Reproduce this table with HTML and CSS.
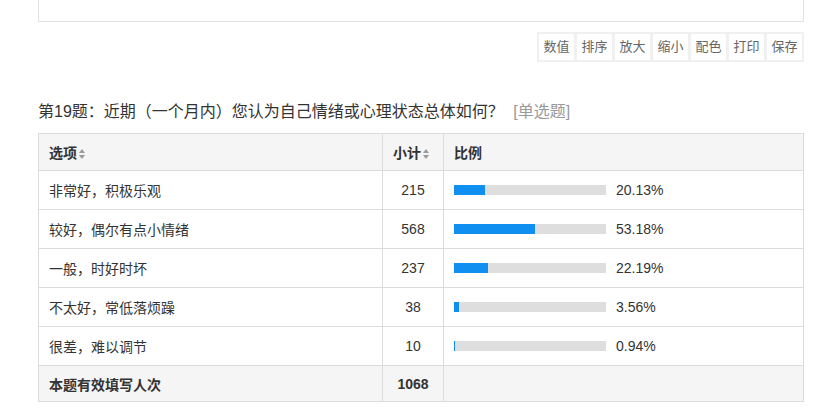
FILE: index.html
```html
<!DOCTYPE html>
<html lang="zh-CN">
<head>
<meta charset="utf-8">
<link rel="stylesheet" href="styles.css">
</head>
<body>
<div class="page">
  <div class="chart-box"></div>
  <div class="toolbar">
    <span class="tool">数值</span><span class="tool">排序</span><span class="tool">放大</span><span class="tool">缩小</span><span class="tool">配色</span><span class="tool">打印</span><span class="tool">保存</span>
  </div>
  <div class="question">第19题：近期（一个月内）您认为自己情绪或心理状态总体如何？ <span class="qtype">[单选题]</span></div>
  <table class="result">
    <thead>
      <tr>
        <th class="c-opt">选项<svg class="sort" width="6" height="10" viewBox="0 0 6 10"><path d="M3 0L6 4H0Z M3 10L0 6H6Z" fill="#9a9a9a"/></svg></th>
        <th class="c-num">小计<svg class="sort" width="6" height="10" viewBox="0 0 6 10"><path d="M3 0L6 4H0Z M3 10L0 6H6Z" fill="#9a9a9a"/></svg></th>
        <th class="c-pct">比例</th>
      </tr>
    </thead>
    <tbody>
      <tr><td class="c-opt">非常好，积极乐观</td><td class="c-num">215</td><td class="c-pct"><div class="ratio"><div class="bar"><div class="fill" style="width:20.13%"></div></div><span class="pct">20.13%</span></div></td></tr>
      <tr><td class="c-opt">较好，偶尔有点小情绪</td><td class="c-num">568</td><td class="c-pct"><div class="ratio"><div class="bar"><div class="fill" style="width:53.18%"></div></div><span class="pct">53.18%</span></div></td></tr>
      <tr><td class="c-opt">一般，时好时坏</td><td class="c-num">237</td><td class="c-pct"><div class="ratio"><div class="bar"><div class="fill" style="width:22.19%"></div></div><span class="pct">22.19%</span></div></td></tr>
      <tr><td class="c-opt">不太好，常低落烦躁</td><td class="c-num">38</td><td class="c-pct"><div class="ratio"><div class="bar"><div class="fill" style="width:3.56%"></div></div><span class="pct">3.56%</span></div></td></tr>
      <tr><td class="c-opt">很差，难以调节</td><td class="c-num">10</td><td class="c-pct"><div class="ratio"><div class="bar"><div class="fill" style="width:0.94%"></div></div><span class="pct">0.94%</span></div></td></tr>
    </tbody>
    <tfoot>
      <tr><td class="c-opt">本题有效填写人次</td><td class="c-num">1068</td><td class="c-pct"></td></tr>
    </tfoot>
  </table>
</div>
</body>
</html>
```

FILE: styles.css
```css
html, body {
  margin: 0;
  padding: 0;
  background: #fff;
}
body {
  font-family: "Liberation Sans", Arial, "Noto Sans CJK SC", sans-serif;
  color: #333;
  font-size: 14px;
}
.page {
  margin-left: 38px;
  width: 766px;
}
.chart-box {
  height: 30px;
  margin-top: -10px;
  border: 1px solid #e2e2e2;
  background: #fff;
}
.toolbar {
  display: flex;
  justify-content: flex-end;
  margin-top: 10px;
}
.toolbar .tool {
  display: block;
  width: 35px;
  height: 26px;
  line-height: 26px;
  text-align: center;
  font-size: 13px;
  color: #666;
  background: #fff;
  border: 2px solid #f0f0f0;
  margin-left: -1px;
}
.question {
  margin-top: 38px;
  font-size: 16px;
  line-height: 24px;
  color: #333;
}
.qtype {
  color: #999;
  margin-left: 5px;
}
.result {
  margin-top: 9px;
  width: 766px;
  border-collapse: collapse;
  border: 1px solid #dcdcdc;
  table-layout: fixed;
}
.result th, .result td {
  border: 1px solid #dcdcdc;
  padding: 0 10px;
  text-align: left;
  font-size: 14px;
}
.result thead th {
  height: 36px;
  background: #f5f5f5;
  font-weight: bold;
  color: #333;
}
.result tbody td {
  height: 38px;
}
.result tfoot td {
  height: 35px;
  background: #f5f5f5;
  font-weight: bold;
}
.c-opt { width: 323px; }
.c-num { width: 40px; }
.result td.c-num { text-align: center; }
.sort {
  margin-left: 2px;
  vertical-align: -1px;
}
.ratio {
  display: flex;
  align-items: center;
}
.bar {
  width: 152px;
  height: 10px;
  background: #dedede;
}
.fill {
  height: 100%;
  background: #0f90f0;
}
.pct {
  margin-left: 10px;
}
```
